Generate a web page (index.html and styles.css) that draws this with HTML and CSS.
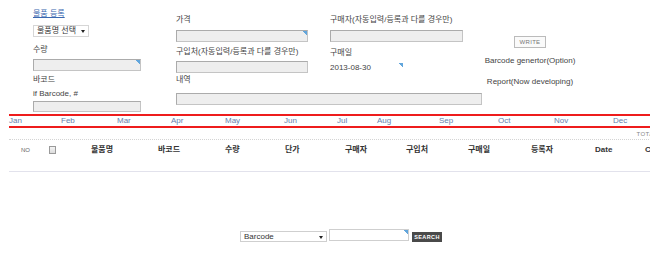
FILE: index.html
```html
<!DOCTYPE html>
<html lang="ko">
<head>
    <meta charset="UTF-8">
    <meta name="viewport" content="width=device-width, initial-scale=1.0">
    <title>물품 등록</title>
    <link rel="stylesheet" href="styles.css">
</head>
<body>

<!-- 등록 폼 -->
<div class="form">
    <div class="col col-one">
        <a href="#" class="title-link">물품 등록</a>
        <div class="pick pick-item">물품명 선택</div>
        <div class="lbl lbl-qty">수량</div>
        <input type="text" class="field field-qty mark">
        <div class="lbl lbl-barcode">바코드</div>
        <div class="lbl lbl-hint">if Barcode, #</div>
        <input type="text" class="field field-barcode">
    </div>

    <div class="col col-two">
        <div class="lbl lbl-price">가격</div>
        <input type="text" class="field field-price mark">
        <div class="lbl lbl-shop">구입처(자동입력/등록과 다를 경우만)</div>
        <input type="text" class="field field-shop">
        <div class="lbl lbl-memo">내역</div>
        <input type="text" class="field field-memo">
    </div>

    <div class="col col-three">
        <div class="lbl lbl-buyer">구매자(자동입력/등록과 다를 경우만)</div>
        <input type="text" class="field field-buyer">
        <div class="lbl lbl-date">구매일</div>
        <div class="date mark">2013-08-30</div>
    </div>

    <div class="col col-four">
        <button class="write-btn">WRITE</button>
        <div class="extra extra-barcode">Barcode genertor(Option)</div>
        <div class="extra extra-report">Report(Now developing)</div>
    </div>
</div>

<!-- 목록 -->
<div class="list">
    <div class="months">
        <span>Jan</span><span>Feb</span><span>Mar</span><span>Apr</span>
        <span>May</span><span>Jun</span><span>Jul</span><span>Aug</span>
        <span>Sep</span><span>Oct</span><span>Nov</span><span>Dec</span>
    </div>

    <div class="total">TOTAL : 0</div>

    <div class="head">
        <span class="no">NO</span>
        <span><i class="check"></i></span>
        <span>물품명</span>
        <span>바코드</span>
        <span>수량</span>
        <span>단가</span>
        <span>구매자</span>
        <span>구입처</span>
        <span>구매일</span>
        <span>등록자</span>
        <span>Date</span>
        <span>Check</span>
    </div>

    <div class="search">
        <div class="pick pick-search">Barcode</div>
        <input type="text" class="search-input mark">
        <button class="search-btn">SEARCH</button>
    </div>
</div>

</body>
</html>
```

FILE: styles.css
```css
html, body {
    overflow: hidden;
}
body {
    margin: 0;
    padding: 0;
    background-color: #fff;
    color: #444;
    font-family: "Liberation Sans", "Noto Sans CJK KR", sans-serif;
    font-size: 8px;
    line-height: 10px;
}

/* top form */
.form {
    display: flex;
    align-items: flex-start;
    height: 114px;
    padding-left: 33px;
}
.col {
    display: flex;
    flex-direction: column;
    align-items: flex-start;
    flex-shrink: 0;
}
.col-one { width: 143px; }
.col-two { width: 154px; }
.col-three { width: 156px; }
.col-four { width: 88px; align-items: center; text-align: center; }

.title-link {
    margin-top: 9px;
    color: #3b68b0;
    text-decoration: underline;
}
.lbl {
    color: #444;
    white-space: nowrap;
}
.field {
    box-sizing: border-box;
    height: 12px;
    padding: 0;
    border: 1px solid #c4c4c4;
    border-top-color: #ababab;
    border-left-color: #ababab;
    background-color: #eeeeee;
}
.mark {
    background-image: linear-gradient(225deg, #62a6dc 3px, transparent 3px);
}

/* column 1 */
.pick-item {
    margin-top: 6px;
    width: 56px;
    height: 12px;
}
.lbl-qty { margin-top: 8px; }
.field-qty { margin-top: 4px; width: 108px; }
.lbl-barcode { margin-top: 4px; }
.lbl-hint { margin-top: 4px; }
.field-barcode { margin-top: 2px; width: 108px; height: 11px; }

/* column 2 */
.lbl-price { margin-top: 15px; }
.field-price { margin-top: 5px; width: 132px; }
.lbl-shop { margin-top: 5px; }
.field-shop { margin-top: 4px; width: 132px; }
.lbl-memo { margin-top: 2px; }
.field-memo { margin-top: 8px; width: 306px; }

/* column 3 */
.lbl-buyer { margin-top: 15px; }
.field-buyer { margin-top: 5px; width: 133px; }
.lbl-date { margin-top: 6px; }
.date {
    margin-top: 5px;
    width: 73px;
    color: #444;
}

/* column 4 */
.write-btn {
    margin-top: 36px;
    width: 32px;
    height: 12px;
    padding: 0;
    border: 1px solid #bbb;
    background-color: #fafafa;
    color: #777;
    font-family: "Liberation Sans", sans-serif;
    font-size: 6px;
    letter-spacing: 0.3px;
    line-height: 10px;
}
.extra { white-space: nowrap; color: #444; }
.extra-barcode { margin-top: 8px; }
.extra-report { margin-top: 11px; }

/* select look */
.pick {
    position: relative;
    box-sizing: border-box;
    padding-left: 3px;
    border: 1px solid #d6d6d6;
    background-color: #fff;
    color: #333;
    line-height: 10px;
}
.pick::after {
    content: "";
    position: absolute;
    right: 3px;
    top: 4px;
    border-left: 2px solid transparent;
    border-right: 2px solid transparent;
    border-top: 3px solid #222;
}

/* list */
.list {
    margin-left: 9px;
    width: 664px;
}
.months {
    display: grid;
    grid-template-columns: 52px 56px 54px 54px 59px 53px 40px 62px 59px 56px 59px 1fr;
    height: 10px;
    border-top: 2px solid #ee1c1c;
    border-bottom: 2px solid #ee1c1c;
    color: #6580ae;
    font-size: 8px;
    line-height: 10px;
}
.total {
    height: 11px;
    border-bottom: 1px dotted #d4d4d4;
    padding-right: 6px;
    text-align: right;
    color: #888;
    font-size: 6px;
    letter-spacing: 0.4px;
    line-height: 12px;
}
.head {
    display: grid;
    grid-template-columns: 28px 42px 67px 67px 60px 60px 61px 62px 63px 64px 50px 1fr;
    height: 10px;
    padding: 5px 0 16px 12px;
    border-bottom: 1px solid #e2e2ec;
    color: #333;
    font-weight: bold;
    white-space: nowrap;
}
.head .no {
    color: #666;
    font-weight: normal;
    font-size: 6px;
}
.check {
    display: block;
    box-sizing: border-box;
    width: 7px;
    height: 8px;
    margin-top: 1px;
    border: 1px solid #9a9a9a;
    background: linear-gradient(#f4f4f4, #dcdcdc);
}

/* search */
.search {
    display: flex;
    align-items: flex-start;
    justify-content: center;
    margin-top: 57px;
}
.pick-search {
    margin-top: 2px;
    width: 87px;
    height: 11px;
    border-color: #cfcfcf;
}
.search-input {
    box-sizing: border-box;
    margin-left: 2px;
    width: 80px;
    height: 12px;
    padding: 0;
    border: 1px solid #cfcfcf;
    background-color: #fff;
}
.search-btn {
    margin-top: 3px;
    margin-left: 3px;
    width: 30px;
    height: 10px;
    padding: 0;
    border: none;
    background-color: #4a4a4a;
    color: #fff;
    font-family: "Liberation Sans", sans-serif;
    font-size: 5.5px;
    font-weight: bold;
    letter-spacing: 0.4px;
    line-height: 10px;
}
```
